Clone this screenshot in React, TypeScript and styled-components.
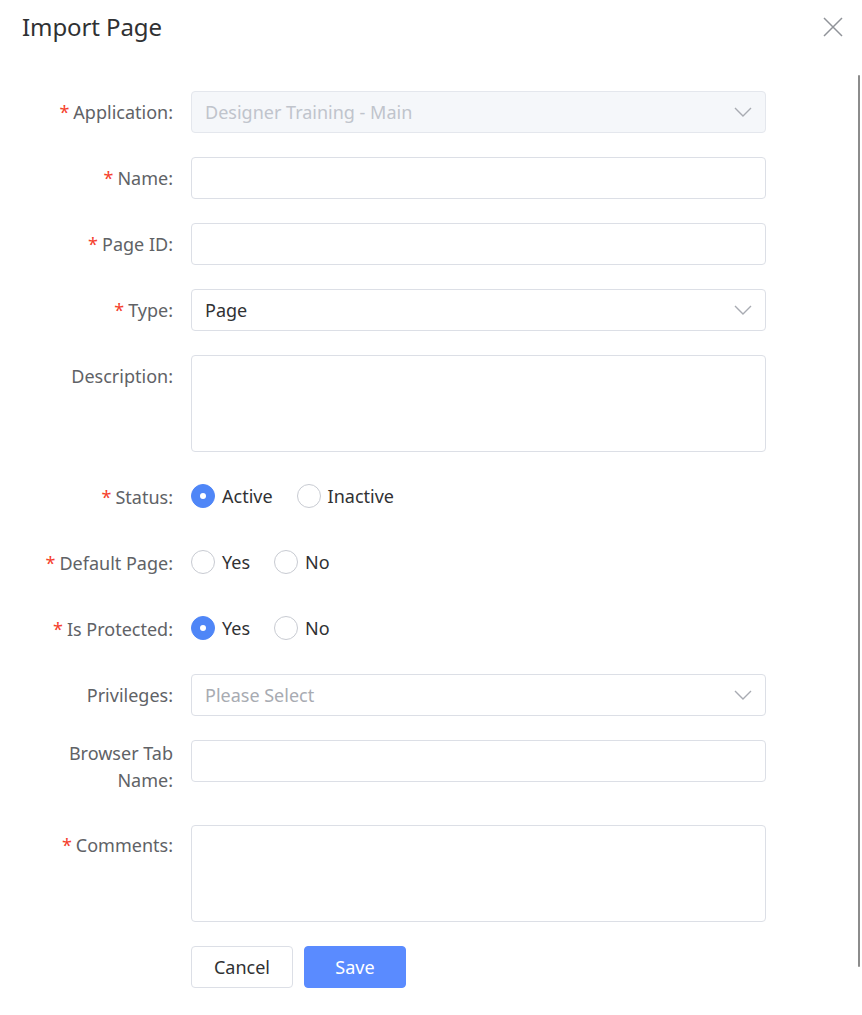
import { createGlobalStyle, styled } from "styled-components";

// Styles
const GlobalStyle = createGlobalStyle`
  body {
    margin: 0;
    background: #ffffff;
    font-family: "Noto Sans", "Open Sans", "Liberation Sans", sans-serif;
  }
`;
const Dialog = styled.div`
  width: 862px;
  height: 1015px;
  background: #ffffff;
  position: relative;
  overflow: hidden;
`;
const DialogHeader = styled.div`
  display: flex;
  align-items: center;
  justify-content: space-between;
  padding: 8px 18px 0 22px;
  height: 38px;
`;
const Title = styled.h2`
  margin: 0 0 2px;
  font-size: 24px;
  font-weight: 400;
  color: #303133;
  letter-spacing: -0.1px;
`;
const CloseBtn = styled.button`
  border: 0;
  background: none;
  padding: 0;
  width: 22px;
  height: 22px;
  display: flex;
  align-items: center;
  justify-content: center;
  cursor: pointer;
`;
const DialogBody = styled.div`
  display: flex;
  padding-top: 45px;
`;
const Form = styled.form`
  flex: 1;
  display: flex;
  flex-direction: column;
`;
const Scrollbar = styled.div`
  width: 2px;
  height: 892px;
  margin: -16px 2px 0 0;
  background: #8c8c8c;
  border-radius: 1px;
`;
const FormItem = styled.div`
  display: grid;
  grid-template-columns: 173px 575px;
  column-gap: 18px;
  margin-bottom: 24px;
`;
const Label = styled.label<{ $tall?: boolean }>`
  text-align: right;
  font-size: 18px;
  line-height: 27px;
  color: #606266;
  padding: ${(p) => (p.$tall ? "0 0 6.5px" : "7.5px 0")};
`;
const Star = styled.span`
  color: #f5402c;
  margin-right: 4px;
`;
const Field = styled.div<{ $disabled?: boolean; $height?: number }>`
  position: relative;
  box-sizing: border-box;
  height: ${(p) => p.$height ?? 42}px;
  border: 1px solid ${(p) => (p.$disabled ? "#e4e7ed" : "#dcdfe6")};
  border-radius: 4px;
  background: ${(p) => (p.$disabled ? "#f5f7fa" : "#ffffff")};
  display: flex;
  align-items: center;
  padding: 0 13px;
  font-size: 18px;
  color: #303133;
`;
const FieldText = styled.span<{ $tone?: "muted" | "placeholder" }>`
  flex: 1;
  color: ${(p) =>
    p.$tone === "muted" ? "#c0c4cc" : p.$tone === "placeholder" ? "#a8abb2" : "#303133"};
`;
const RadioGroup = styled.div`
  display: flex;
  align-items: center;
  gap: 24px;
  height: 42px;
  margin-top: -1px;
`;
const RadioOption = styled.label`
  display: flex;
  align-items: center;
  gap: 7px;
  font-size: 18px;
  color: #303133;
  cursor: pointer;
`;
const RadioCircle = styled.span<{ $checked?: boolean }>`
  box-sizing: border-box;
  width: 24px;
  height: 24px;
  border-radius: 50%;
  border: 1px solid ${(p) => (p.$checked ? "#4f86f7" : "#c8cbd2")};
  background: ${(p) => (p.$checked ? "#4f86f7" : "#ffffff")};
  display: flex;
  align-items: center;
  justify-content: center;
  &::after {
    content: "";
    width: 6px;
    height: 6px;
    border-radius: 50%;
    background: #ffffff;
    display: ${(p) => (p.$checked ? "block" : "none")};
  }
`;
const Actions = styled.div`
  display: flex;
  gap: 11px;
  margin: 0 0 0 191px;
`;
const Button = styled.button<{ $primary?: boolean }>`
  width: 102px;
  height: 42px;
  border-radius: 4px;
  font-family: inherit;
  font-size: 18px;
  border: 1px solid ${(p) => (p.$primary ? "#5a8bff" : "#dcdfe6")};
  background: ${(p) => (p.$primary ? "#5a8bff" : "#ffffff")};
  color: ${(p) => (p.$primary ? "#ffffff" : "#303133")};
  cursor: pointer;
`;

const Chevron = () => (
  <svg width="18" height="10" viewBox="0 0 18 10" fill="none">
    <path d="M1 1l8 8 8-8" stroke="#a8abb2" strokeWidth="1.4" />
  </svg>
);

type RadioProps = { options: string[]; value: string };

const Radios = ({ options, value }: RadioProps) => (
  <RadioGroup>
    {options.map((o) => (
      <RadioOption key={o}>
        <RadioCircle $checked={o === value} />
        {o}
      </RadioOption>
    ))}
  </RadioGroup>
);

const App = (): JSX.Element => {
  return (
    <Dialog>
      <GlobalStyle />
      <DialogHeader>
        <Title>Import Page</Title>
        <CloseBtn aria-label="Close">
          <svg width="20" height="20" viewBox="0 0 20 20" fill="none">
            <path d="M1 1l18 18M19 1L1 19" stroke="#909399" strokeWidth="1.5" />
          </svg>
        </CloseBtn>
      </DialogHeader>

      <DialogBody>
        <Form>
          <FormItem>
            <Label><Star>*</Star>Application:</Label>
            <Field $disabled>
              <FieldText $tone="muted">Designer Training - Main</FieldText>
              <Chevron />
            </Field>
          </FormItem>
          <FormItem>
            <Label><Star>*</Star>Name:</Label>
            <Field />
          </FormItem>
          <FormItem>
            <Label><Star>*</Star>Page ID:</Label>
            <Field />
          </FormItem>
          <FormItem>
            <Label><Star>*</Star>Type:</Label>
            <Field>
              <FieldText>Page</FieldText>
              <Chevron />
            </Field>
          </FormItem>
          <FormItem>
            <Label>Description:</Label>
            <Field $height={97} />
          </FormItem>
          <FormItem>
            <Label><Star>*</Star>Status:</Label>
            <Radios options={["Active", "Inactive"]} value="Active" />
          </FormItem>
          <FormItem>
            <Label><Star>*</Star>Default Page:</Label>
            <Radios options={["Yes", "No"]} value="" />
          </FormItem>
          <FormItem>
            <Label><Star>*</Star>Is Protected:</Label>
            <Radios options={["Yes", "No"]} value="Yes" />
          </FormItem>
          <FormItem>
            <Label>Privileges:</Label>
            <Field>
              <FieldText $tone="placeholder">Please Select</FieldText>
              <Chevron />
            </Field>
          </FormItem>
          <FormItem>
            <Label $tall>Browser Tab<br />Name:</Label>
            <Field />
          </FormItem>
          <FormItem>
            <Label><Star>*</Star>Comments:</Label>
            <Field $height={97} />
          </FormItem>
          <Actions>
            <Button type="button">Cancel</Button>
            <Button type="button" $primary>Save</Button>
          </Actions>
        </Form>
        <Scrollbar />
      </DialogBody>
    </Dialog>
  );
};

export default App;
